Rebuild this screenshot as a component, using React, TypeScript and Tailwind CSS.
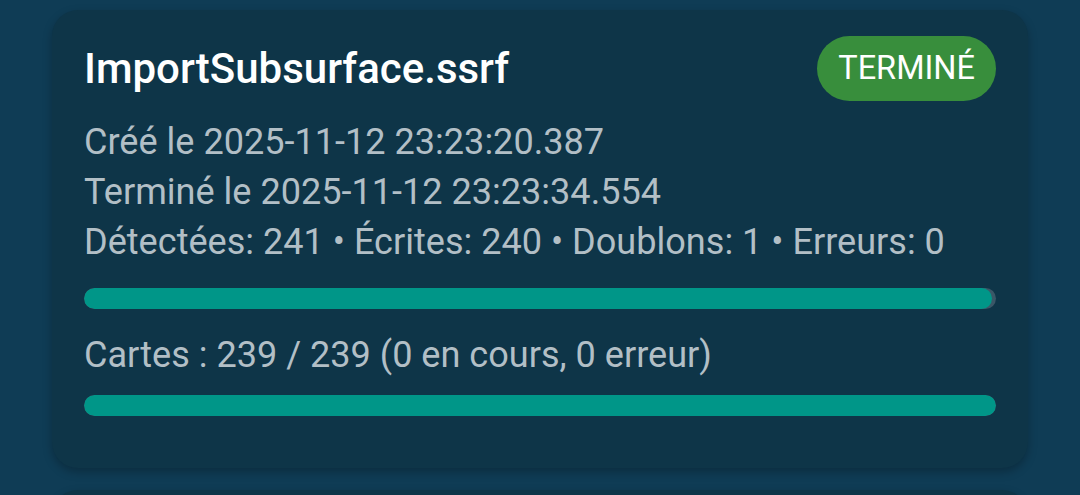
export default function App() {
  const detected = 241;
  const written = 240;
  return (
    <div className="h-screen overflow-hidden bg-[#0f3c55] px-[52px] pt-[10px] font-['Roboto',sans-serif]">
      <div className="rounded-[26px] bg-[#0e3548] pl-[32px] pr-[32px] pt-[26px] pb-[52px] shadow-[0_4px_10px_rgba(0,0,0,0.25)]">
        <div className="flex items-center justify-between">
          <h2 className="text-[42px] font-medium leading-[50px] text-white">ImportSubsurface.ssrf</h2>
          <span className="flex h-[65px] items-center rounded-full bg-[#388e3c] px-[21px] text-[32.5px] text-white">TERMINÉ</span>
        </div>
        <div className="mt-[16px] text-[36.1px] leading-[50px] text-[#b2bfc6]">
          <p>Créé le 2025-11-12 23:23:20.387</p>
          <p>Terminé le 2025-11-12 23:23:34.554</p>
          <p>Détectées: 241 • Écrites: 240 • Doublons: 1 • Erreurs: 0</p>
        </div>
        <div className="mt-[21px] h-[21px] overflow-hidden rounded-full bg-[#3a5767]">
          <div className="h-full rounded-full bg-[#009688]" style={{ width: `${(written / detected) * 100}%` }} />
        </div>
        <p className="mt-[21px] text-[36.1px] leading-[50px] text-[#b2bfc6]">Cartes : 239 / 239 (0 en cours, 0 erreur)</p>
        <div className="mt-[15px] h-[21px] overflow-hidden rounded-full bg-[#3a5767]">
          <div className="h-full w-full rounded-full bg-[#009688]" />
        </div>
      </div>
      <div className="mt-[22px] h-[60px] rounded-[26px] bg-[#0e3548] shadow-[0_4px_10px_rgba(0,0,0,0.25)]" />
    </div>
  );
}
